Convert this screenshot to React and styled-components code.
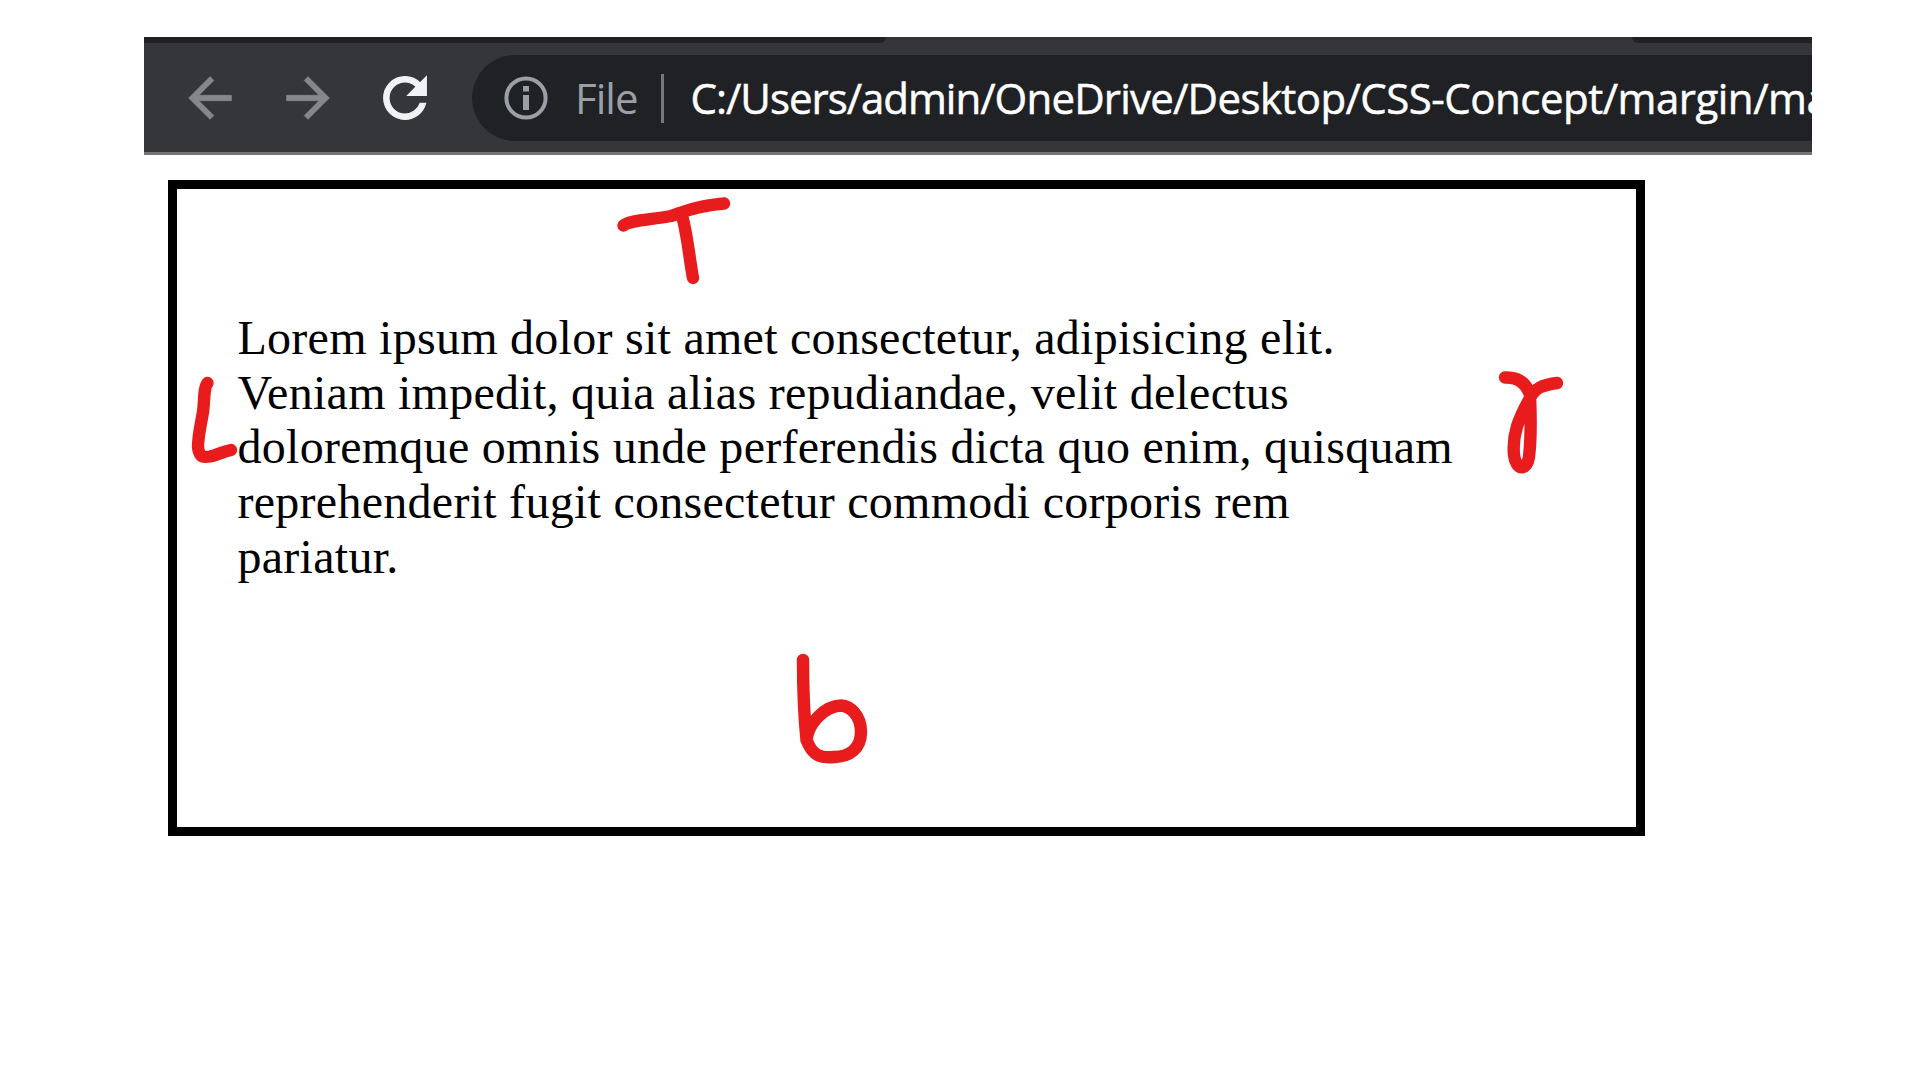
import React from "react";
import styled, { createGlobalStyle } from "styled-components";

const GlobalStyle = createGlobalStyle`
  *, *::before, *::after { box-sizing: border-box; }
  html, body { margin: 0; background: #fff; }
`;

const Page = styled.main`
  position: relative;
  width: 1920px;
  height: 1080px;
  padding: 37px 108px 0 144px;
  overflow: hidden;
  background: #fff;
`;

const BrowserChrome = styled.header`
  height: 118px;
  display: flex;
  flex-direction: column;
  overflow: hidden;
  background: #35363a;
  border-bottom: 3px solid #75767a;
`;

const TabStrip = styled.div`
  height: 6px;
  flex: none;
  display: flex;
  justify-content: space-between;
`;

const StripSegment = styled.div`
  width: ${({ $width }) => $width}px;
  background: #202124;
  border-radius: ${({ $radius }) => $radius};
`;

const Toolbar = styled.div`
  flex: 1;
  display: flex;
  align-items: flex-start;
  padding: 12px 0 0 34px;
`;

const NavButtons = styled.nav`
  flex: none;
  width: 294px;
  height: 86px;
  display: flex;
  align-items: center;
  gap: 33.5px;
`;

const NavIcon = styled.svg`
  flex: none;
  width: 64px;
  height: 64px;
  fill: ${({ $active }) => ($active ? "#f1f2f4" : "#86878a")};
  stroke: ${({ $active }) => ($active ? "#f1f2f4" : "#86878a")};
  stroke-width: ${({ $active }) => ($active ? 0.45 : 0.3)};
`;

const AddressBar = styled.div`
  flex: 1;
  min-width: 0;
  height: 86px;
  display: flex;
  align-items: center;
  padding-left: 32px;
  overflow: hidden;
  white-space: nowrap;
  border-radius: 43px 0 0 43px;
  background: #202124;
  font-family: "Open Sans", "Noto Sans", sans-serif;
  font-size: 42px;
  line-height: 86px;
`;

const InfoIcon = styled.svg`
  flex: none;
  width: 44px;
  height: 44px;
  margin-right: 27px;
`;

const Scheme = styled.span`
  flex: none;
  width: 86px;
  color: #9aa0a6;
  letter-spacing: -1px;
`;

const Divider = styled.span`
  flex: none;
  width: 3px;
  height: 49px;
  margin-right: 26.5px;
  background: #75777b;
`;

const Url = styled.span`
  flex: none;
  color: #fff;
  -webkit-text-stroke: 0.5px #fff;
`;

const UrlPart = styled.span`
  letter-spacing: ${({ $tracking }) => $tracking}px;
`;

const Frame = styled.section`
  width: 1477px;
  height: 656px;
  margin: 25px 0 0 24px;
  padding: 122px 170px 0 60.5px;
  border: 9px solid #000;
`;

const Paragraph = styled.p`
  margin: 0;
  color: #000;
  font-family: "Liberation Serif", "Times New Roman", serif;
  font-size: 48px;
  line-height: 54.7px;
  letter-spacing: 0.27px;
  white-space: nowrap;
`;

const Line = styled.span`
  display: block;
`;

const Annotations = styled.svg`
  position: absolute;
  inset: 0;
  width: 1920px;
  height: 1080px;
  fill: none;
  stroke: #e81c1c;
  stroke-width: 12.4;
  stroke-linecap: round;
  stroke-linejoin: round;
  pointer-events: none;
`;

const urlParts = [
  { text: "C:/Users/admin/", tracking: -1.02 },
  { text: "OneDrive/", tracking: -0.8 },
  { text: "Desktop/", tracking: -0.6 },
  { text: "CSS-Concept/margin/ma", tracking: -0.5 },
];

const lines = [
  "Lorem ipsum dolor sit amet consectetur, adipisicing elit.",
  "Veniam impedit, quia alias repudiandae, velit delectus",
  "doloremque omnis unde perferendis dicta quo enim, quisquam",
  "reprehenderit fugit consectetur commodi corporis rem",
  "pariatur.",
];

export default function App() {
  return (
    <Page>
      <GlobalStyle />
      <BrowserChrome>
        <TabStrip>
          <StripSegment $width={742} $radius="0 0 10px 0" />
          <StripSegment $width={180} $radius="0 0 0 10px" />
        </TabStrip>
        <Toolbar>
          <NavButtons>
            <NavIcon viewBox="0 0 24 24">
              <path d="M20 11H7.83l5.59-5.59L12 4l-8 8 8 8 1.41-1.41L7.83 13H20v-2z" />
            </NavIcon>
            <NavIcon viewBox="0 0 24 24">
              <path d="M12 4l-1.41 1.41L16.17 11H4v2h12.17l-5.58 5.59L12 20l8-8z" />
            </NavIcon>
            <NavIcon viewBox="0 0 24 24" $active>
              <path d="M17.65 6.35C16.2 4.9 14.21 4 12 4c-4.42 0-7.99 3.58-7.99 8s3.57 8 7.99 8c3.73 0 6.84-2.55 7.73-6h-2.08c-.82 2.33-3.04 4-5.65 4-3.31 0-6-2.69-6-6s2.69-6 6-6c1.66 0 3.14.69 4.22 1.78L13 11h7V4l-2.35 2.35z" />
            </NavIcon>
          </NavButtons>
          <AddressBar>
            <InfoIcon viewBox="0 0 44 44">
              <circle cx="22" cy="22" r="19.6" fill="none" stroke="#9aa0a6" strokeWidth="4" />
              <path d="M19 10h6v5.5h-6zM19 19h6v15h-6z" fill="#9aa0a6" />
            </InfoIcon>
            <Scheme>File</Scheme>
            <Divider />
            <Url>
              {urlParts.map(({ text, tracking }) => (
                <UrlPart key={text} $tracking={tracking}>{text}</UrlPart>
              ))}
            </Url>
          </AddressBar>
        </Toolbar>
      </BrowserChrome>
      <Frame>
        <Paragraph>
          {lines.map((line) => (
            <Line key={line}>{line}</Line>
          ))}
        </Paragraph>
      </Frame>
      <Annotations viewBox="0 0 1920 1080">
        <path d="M623.500 225.500C630 220 650 220 671 216C684 212 693 206.500 724 203.500M682 216C687 232 689 256 693 278" />
        <path d="M207.500 383C203.500 388 204.500 402 203 412C201 424 198 436 198 447C199 458 204 457.500 210 456.500C217 455 222 452 231 450" />
        <path d="M1505 377.500C1517 377 1526 382 1530 395C1531 418 1531 440 1529 457C1527 471 1516 471 1514 455C1512 434 1519 418 1529 400C1535 387 1543 385 1557 383" />
        <path d="M803 660C803 690 804 715 806.500 740M806.500 740C808 723 825 706 841 705.500C850 706 861 715 861 732C861 749 849 757 834 757C816 759 811 751 806.500 740" />
      </Annotations>
    </Page>
  );
}
